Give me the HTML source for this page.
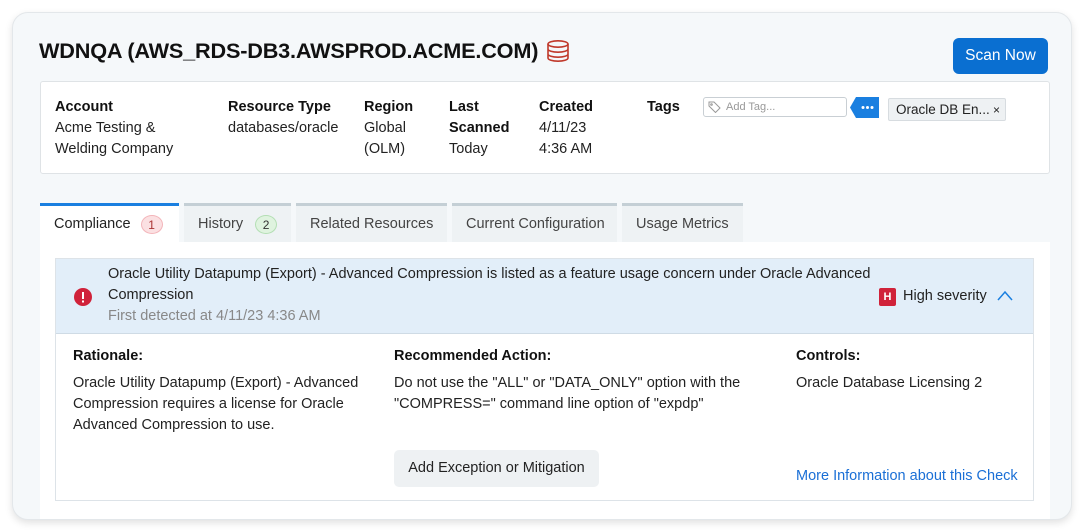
<!DOCTYPE html>
<html><head><meta charset="utf-8"><style>
*{box-sizing:border-box;margin:0;padding:0}
body{width:1085px;height:532px;background:#fff;font-family:"Liberation Sans",Arial,sans-serif;color:#222;position:relative;overflow:hidden}
.card{position:absolute;left:12px;top:12px;width:1060px;height:508px;background:#f5f8fa;border:1px solid #e3e7ea;border-radius:16px;box-shadow:0 3px 8px rgba(0,0,0,.12);overflow:hidden}
.abs{position:absolute}
h1{position:absolute;font-size:21.7px;font-weight:bold;color:#111;letter-spacing:-.2px}
.btn{position:absolute;width:95px;height:36px;background:#0a6fd1;color:#fff;border-radius:6px;font-size:15.5px;text-align:center;line-height:36px}
.info{position:absolute;width:1010px;height:93px;background:#fff;border:1px solid #dfe3e6;border-radius:3px}
.lbl{font-weight:bold;font-size:14.5px;color:#111}
.col{position:absolute;top:15px;line-height:21px;font-size:14.5px}
.tab{position:absolute;top:190px;height:39px;background:#eef2f4;border-top:3px solid #c4cfd5;font-size:14.5px;color:#444;line-height:37px;padding-left:14px}
.badge{display:inline-block;width:22px;height:19px;border-radius:50%;text-align:center;line-height:19px;font-size:12px;margin-left:10px;vertical-align:middle}
.panel{position:absolute;width:979px;height:243px;background:#fff;border:1px solid #dde3e8}
.head{position:absolute;left:0;top:0;width:977px;height:75px;background:#e2eef9;border-bottom:1px solid #cfdbe5}
.t{font-size:14.5px;line-height:21px}
</style></head><body>
<div class="card">
<h1 style="left:26px;top:25px">WDNQA (AWS_RDS-DB3.AWSPROD.ACME.COM)</h1>
<svg class="abs" style="left:533px;top:26px" width="24" height="24" viewBox="0 0 24 24" fill="none" stroke="#c0392b" stroke-width="1.6"><ellipse cx="12" cy="5" rx="10" ry="3.2"/><path d="M2 5v14c0 1.8 4.5 3.2 10 3.2s10-1.4 10-3.2V5M2 10c0 1.8 4.5 3.2 10 3.2s10-1.4 10-3.2M2 15c0 1.8 4.5 3.2 10 3.2s10-1.4 10-3.2"/></svg>
<div class="btn" style="left:940px;top:25px">Scan Now</div>
<div class="info" style="left:27px;top:68px">
 <div class="col" style="left:14px"><div class="lbl">Account</div>Acme Testing &amp;<br>Welding Company</div>
 <div class="col" style="left:187px"><div class="lbl">Resource Type</div>databases/oracle</div>
 <div class="col" style="left:323px"><div class="lbl">Region</div>Global<br>(OLM)</div>
 <div class="col" style="left:408px"><div class="lbl">Last<br>Scanned</div>Today</div>
 <div class="col" style="left:498px"><div class="lbl">Created</div>4/11/23<br>4:36 AM</div>
 <div class="col" style="left:606px"><div class="lbl">Tags</div></div>
 <div class="abs" style="left:662px;top:15px;width:144px;height:20px;border:1px solid #c9cfd4;border-radius:3px;font-size:11px;color:#999;line-height:18px;padding-left:22px">Add Tag...
  <svg class="abs" style="left:4px;top:3px" width="13" height="12" viewBox="0 0 13 12" fill="none" stroke="#999" stroke-width="1"><path d="M1 1h5l6 6-4.5 4.5-6.5-6.5z"/><circle cx="3.5" cy="3.5" r=".8"/></svg></div>
 <svg class="abs" style="left:809px;top:15px" width="29" height="21" viewBox="0 0 29 21"><path d="M6 0h23v21H6L0 10.5z" fill="#1a7fe0"/><circle cx="13" cy="10.5" r="1.5" fill="#fff"/><circle cx="17.5" cy="10.5" r="1.5" fill="#fff"/><circle cx="22" cy="10.5" r="1.5" fill="#fff"/></svg>
 <div class="abs" style="left:847px;top:16px;width:118px;height:23px;background:#eef1f3;border:1px solid #d7dce0;border-radius:2px;font-size:13.5px;line-height:21px;padding-left:7px;white-space:nowrap">Oracle DB En...<span class="abs" style="left:104px;top:1px;font-size:12px">×</span></div>
</div>
<div class="abs" style="left:27px;top:229px;width:1010px;height:290px;background:#fff"></div>
<div class="tab" style="left:27px;width:139px;background:#fff;border-top-color:#1a7fe0;height:40px;color:#222">Compliance<span class="badge" style="background:#fbe0e2;border:1px solid #f3b5ba;color:#a33">1</span></div>
<div class="tab" style="left:171px;width:107px">History<span class="badge" style="background:#dff3df;border:1px solid #b4dfb4;color:#333;margin-left:12px">2</span></div>
<div class="tab" style="left:283px;width:151px">Related Resources</div>
<div class="tab" style="left:439px;width:165px">Current Configuration</div>
<div class="tab" style="left:609px;width:121px">Usage Metrics</div>
<div class="panel" style="left:42px;top:245px">
 <div class="head">
  <svg class="abs" style="left:18px;top:29px" width="18" height="18" viewBox="0 0 18 18"><circle cx="9" cy="9" r="9" fill="#d0223a"/><rect x="8" y="4" width="2" height="7" fill="#fff"/><rect x="8" y="12.5" width="2" height="2" fill="#fff"/></svg>
  <div class="abs t" style="left:52px;top:5px;color:#222">Oracle Utility Datapump (Export) - Advanced Compression is listed as a feature usage concern under Oracle Advanced<br>Compression</div>
  <div class="abs t" style="left:52px;top:47px;color:#888">First detected at 4/11/23 4:36 AM</div>
  <div class="abs" style="left:823px;top:29px;width:17px;height:18px;background:#d0223a;color:#fff;font-size:11px;font-weight:bold;text-align:center;line-height:18px;border-radius:2px">H</div>
  <div class="abs t" style="left:847px;top:27px">High severity</div>
  <svg class="abs" style="left:941px;top:31px" width="16" height="12" viewBox="0 0 16 12" fill="none" stroke="#1a7fe0" stroke-width="1.5"><path d="M1 10l7-8 7 8"/></svg>
 </div>
 <div class="abs lbl" style="left:17px;top:89px">Rationale:</div>
 <div class="abs lbl" style="left:338px;top:89px">Recommended Action:</div>
 <div class="abs lbl" style="left:740px;top:89px">Controls:</div>
 <div class="abs t" style="left:17px;top:114px">Oracle Utility Datapump (Export) - Advanced<br>Compression requires a license for Oracle<br>Advanced Compression to use.</div>
 <div class="abs t" style="left:338px;top:114px">Do not use the "ALL" or "DATA_ONLY" option with the<br>"COMPRESS=" command line option of "expdp"</div>
 <div class="abs t" style="left:740px;top:114px">Oracle Database Licensing 2</div>
 <div class="abs t" style="left:338px;top:191px;width:205px;height:37px;background:#eef1f3;border-radius:5px;text-align:center;line-height:37px">Add Exception or Mitigation</div>
 <div class="abs t" style="left:740px;top:207px;color:#1a6fd6">More Information about this Check</div>
</div>
</div>
</body></html>
